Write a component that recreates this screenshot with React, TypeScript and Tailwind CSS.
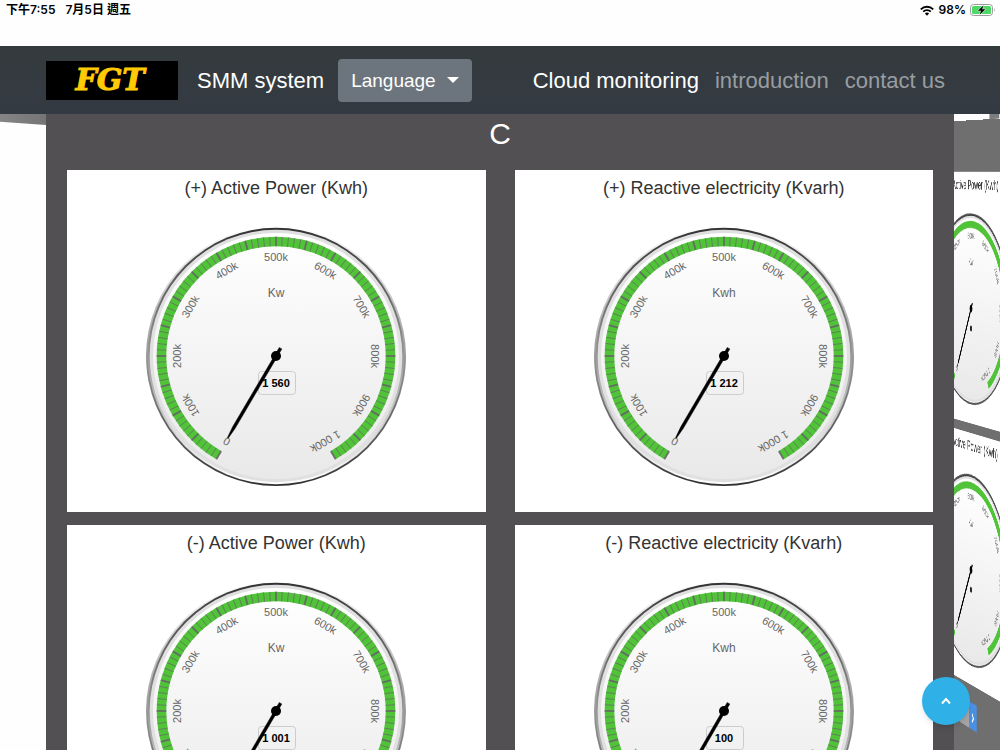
import React from "react";

type Reading = { title: string; unit: string; value: number };

const READINGS: Reading[] = [
  { title: "(+) Active Power (Kwh)", unit: "Kw", value: 1560 },
  { title: "(+) Reactive electricity (Kvarh)", unit: "Kwh", value: 1212 },
  { title: "(-) Active Power (Kwh)", unit: "Kw", value: 1001 },
  { title: "(-) Reactive electricity (Kvarh)", unit: "Kwh", value: 100 },
];

const NEXT_READINGS: Reading[] = READINGS.filter((r) => r.title.includes("Active")).map((r) => ({ ...r, value: 0 }));

const START = -150;
const SWEEP = 300;
const MAX = 1000000;

const spaced = (n: number) => String(n).replace(/\B(?=(\d{3})+$)/g, " ");

function polar(r: number, deg: number) {
  const a = (deg * Math.PI) / 180;
  return `${(r * Math.sin(a)).toFixed(2)} ${(-r * Math.cos(a)).toFixed(2)}`;
}

function Gauge({ id, unit, value, plain }: { id: string; unit: string; value: number; plain?: boolean }) {
  const ticks = Array.from({ length: 101 }, (_, i) => i);
  const labels = Array.from({ length: 11 }, (_, i) => i);
  const angle = START + (value / MAX) * SWEEP;
  return (
    <svg
      viewBox="-131 -131 262 262"
      className="mx-auto mt-[27px] block size-[262px] font-['Liberation_Sans',sans-serif]"
      role="img"
      aria-label={`${spaced(value)} ${unit}`}
    >
      <defs>
        <linearGradient id={`${id}-rim`} x1="0" y1="0" x2="0" y2="1">
          <stop offset="0" stopColor="#fff" />
          <stop offset="1" stopColor="#333" />
        </linearGradient>
        <linearGradient id={`${id}-bevel`} x1="0" y1="0" x2="0" y2="1">
          <stop offset="0" stopColor="#333" />
          <stop offset="1" stopColor="#fff" />
        </linearGradient>
        <linearGradient id={`${id}-face`} x1="0" y1="0" x2="0" y2="1">
          <stop offset="0" stopColor="#fff" />
          <stop offset="1" stopColor="#e9e9ea" />
        </linearGradient>
      </defs>
      <circle r="130" fill={`url(#${id}-rim)`} />
      <circle r="128.2" fill={`url(#${id}-bevel)`} />
      {plain && <circle r="128.5" fill="none" stroke="#555" strokeWidth="2" />}
      <circle r="126.3" fill="#e0e0e0" />
      <circle r="123" fill={`url(#${id}-face)`} />
      <path
        d={`M${polar(114.5, START)} A114.5 114.5 0 1 1 ${polar(114.5, START + SWEEP)}`}
        fill="none"
        stroke="#50c339"
        strokeWidth="9.6"
      />
      {!plain &&
        ticks.map((i) => (
          <line
            key={i}
            y1="-119.3"
            y2="-109.7"
            stroke="#666"
            strokeOpacity={i % 5 === 0 ? 0.9 : 0.75}
            strokeWidth={i % 5 === 0 ? 1.8 : 0.9}
            transform={`rotate(${START + i * 3})`}
          />
        ))}
      {labels.map((i) => (
        <text
          key={i}
          y="-95"
          textAnchor="middle"
          fontSize="11"
          fill="#666"
          transform={`rotate(${START + i * 30})`}
        >
          {i === 0 ? "0" : `${spaced(i * 100)}k`}
        </text>
      ))}
      <text y="-59" textAnchor="middle" fontSize="12" fill="#666">
        {unit}
      </text>
      {!plain && <rect x="-17.5" y="15.5" width="37" height="23" rx="3" fill="none" stroke="#ccc" />}
      <text y="31" textAnchor="middle" fontSize="11" fontWeight="700" fill="#000">
        {spaced(value)}
      </text>
      <path
        d="M-1.5 9 L1.5 9 L1.5 -83 L.5 -95 L-.5 -95 L-1.5 -83 Z"
        stroke="#000"
        strokeWidth=".4"
        transform={`rotate(${angle})`}
      />
      <circle r="5" />
    </svg>
  );
}

function Card({ id, reading, plain }: { id: string; reading: Reading; plain?: boolean }) {
  return (
    <section className="bg-white pt-2 pb-[25px] text-center">
      <h3 className="text-lg leading-5 whitespace-nowrap text-[#333]">{reading.title}</h3>
      <Gauge id={id} unit={reading.unit} value={reading.value} plain={plain} />
    </section>
  );
}

function StatusBar() {
  return (
    <div className="flex h-[46px] items-start justify-between bg-[#fefefe] px-[6px] pt-[2px] font-['Inter','Noto_Sans_CJK_TC',sans-serif] text-xs leading-4 font-semibold text-black">
      <div className="flex gap-[10px]">
        <span>下午7:55</span>
        <span>7月5日 週五</span>
      </div>
      <div className="-mr-[2px] flex items-center gap-[5px]">
        <svg viewBox="0 0 14 11" className="h-[11px] w-[14px]" fill="none" stroke="#000" strokeWidth="1.9">
          <path d="M.8 4.3 A8.8 8.8 0 0 1 13.2 4.3" />
          <path d="M3.2 6.7 A5.4 5.4 0 0 1 10.8 6.7" />
          <path d="M7 10.8 L4.9 8.6 A3 3 0 0 1 9.1 8.6 Z" fill="#000" stroke="none" />
        </svg>
        <span>98%</span>
        <svg viewBox="0 0 26 12" className="-ml-px h-3 w-[26px]">
          <rect x=".5" y=".5" width="22" height="11" rx="3" fill="#fff" stroke="#9b9b9b" />
          <rect x="2" y="2" width="19" height="8" rx="1.6" fill="#4cd964" />
          <path d="M24 4 Q25.6 6 24 8 Z" fill="#9b9b9b" />
          <path
            d="M13.6 1.2 L7.8 6.7 H11 L9.6 10.8 L15.4 5.3 H12.2 Z"
            fill="#000"
            stroke="#fff"
            strokeWidth=".9"
            paintOrder="stroke"
          />
        </svg>
      </div>
    </div>
  );
}

function NavBar() {
  return (
    <nav className="relative z-20 flex h-[68px] items-center bg-linear-to-b from-[#343b3d] to-[#343a43] px-[46px] text-[22px] leading-7 text-white">
      <a
        href="#home"
        className="flex h-[39px] w-[132px] items-center justify-center bg-black pr-1 font-['DejaVu_Serif',serif] text-[30px] font-bold text-[#ffcb05] italic [-webkit-text-stroke:1px_#ffcb05]"
      >
        FGT
      </a>
      <a href="#system" className="ml-[19px] pt-[2px]">
        SMM system
      </a>
      <button
        type="button"
        className="ml-[14px] flex h-[43px] items-center gap-[11px] rounded bg-[#6c757d] px-[13px] text-[19px]"
      >
        <span className="pt-[2px]">Language</span>
        <span className="border-x-[6px] border-t-[6px] border-x-transparent border-t-white" />
      </button>
      <div className="mr-[9px] ml-auto flex gap-4 pt-[2px] text-[#999da1]">
        <a href="#monitoring" className="text-white">
          Cloud monitoring
        </a>
        <a href="#introduction">introduction</a>
        <a href="#contact">contact us</a>
      </div>
    </nav>
  );
}

export default function App() {
  return (
    <div className="flex h-screen flex-col overflow-hidden bg-[#fefefe] font-['Liberation_Sans',Arial,sans-serif]">
      <StatusBar />
      <NavBar />
      <div className="relative min-h-0 flex-1">
        {/* neighbouring slides, turned away in perspective behind the active one */}
        <div className="absolute top-0 left-0 h-[11px] w-[46px] bg-linear-to-r from-[#858585] to-[#757575] [clip-path:polygon(0_0,100%_0,100%_100%,0_70%)]" />
        <aside
          aria-hidden="true"
          className="absolute -top-3 left-[calc(100%-259px)] h-[1100px] w-[calc(100%-92px)] origin-[230px_69px] [transform:matrix3d(0.291,0,0,-0.00033,0,0.736,0,0,0,0,1,0,0,0,0,1)] bg-[#6f6f70] pt-[70px]"
        >
          <div className="absolute -top-5 left-[292px] h-5 w-[32px] bg-[#7c7c7e]" />
          <div className="mx-[21px] grid w-[418px] gap-y-[13px]">
            {NEXT_READINGS.map((r, i) => (
              <Card key={r.title} id={`next${i}`} reading={r} plain />
            ))}
          </div>
          <div className="mt-6 flex pl-[190px] text-3xl font-bold text-white">
            <span className="h-9 w-[33px] bg-[#a5a5a5]" />
            <span className="flex h-9 w-[26px] items-center justify-center bg-[#4a90e2]">›</span>
          </div>
        </aside>
        <main className="relative z-10 mx-[46px] h-[1000px] bg-[#525052]">
          <h2 className="mb-4 text-center text-3xl leading-10 font-light text-white">C</h2>
          <div className="grid grid-cols-2 gap-x-[29px] gap-y-[13px] px-[21px]">
            {READINGS.map((r, i) => (
              <Card key={r.title} id={`gauge${i}`} reading={r} />
            ))}
          </div>
        </main>
      </div>
      <button
        type="button"
        aria-label="Back to top"
        className="fixed right-[30px] bottom-[25px] z-30 flex size-12 items-center justify-center rounded-full bg-[#2fb1e8] shadow-md"
      >
        <svg viewBox="0 0 10 8" className="h-2 w-[10px]" fill="none" stroke="#fff" strokeWidth="2">
          <path d="M1 6.5 L5 2 L9 6.5" />
        </svg>
      </button>
    </div>
  );
}
